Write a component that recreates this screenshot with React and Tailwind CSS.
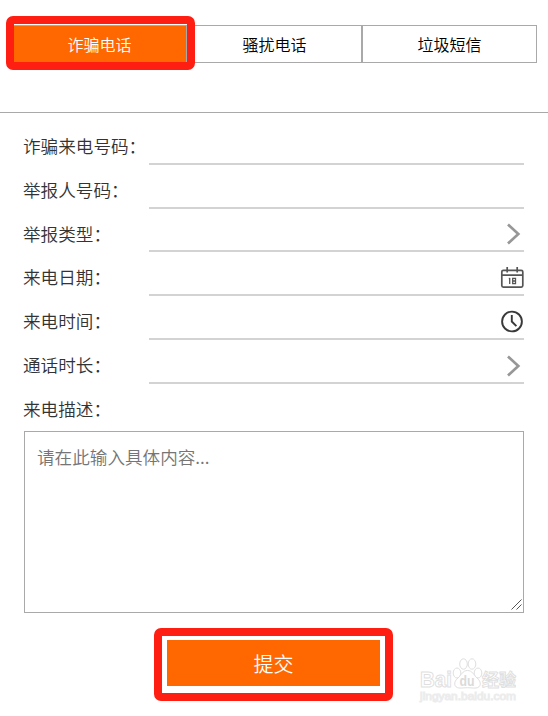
import React from "react";

function Chevron() {
  return (
    <svg className="mr-[3px] mb-[5px] h-[22px] w-[15px]" viewBox="0 0 15 22" fill="none" stroke="#979797" strokeWidth="2.7">
      <path d="M2 1.5 L12.3 11 L2 20.5" />
    </svg>
  );
}

function Calendar() {
  return (
    <svg className="mb-[5px] h-[23px] w-[24px]" viewBox="0 0 24 23" fill="none" stroke="#555" strokeWidth="1.7">
      <rect x="1.8" y="4.3" width="21" height="16.8" rx="1.5" />
      <path d="M1.8 9.2h21M7.2 1v5.5M17.2 1v5.5" />
      <path d="M9.7 12v6M8.8 12.5h.9M12.7 12.3h2.8v2.7h-2.8zM12.7 15h2.8v2.7h-2.8z" strokeWidth="1.3" />
    </svg>
  );
}

function Clock() {
  return (
    <svg className="mb-[5px] h-[23px] w-[24px]" viewBox="0 0 24 23" fill="none" stroke="#3a3a3a" strokeWidth="1.9">
      <circle cx="12" cy="11.5" r="9.9" />
      <path d="M11.8 5v6.5l4.6 4.6" />
    </svg>
  );
}

const rows = [
  { label: "诈骗来电号码：", height: "h-[44px]" },
  { label: "举报人号码：", height: "h-[44px]" },
  { label: "举报类型：", height: "h-[43px]", icon: <Chevron /> },
  { label: "来电日期：", height: "h-[44px]", icon: <Calendar /> },
  { label: "来电时间：", height: "h-[44px]", icon: <Clock /> },
  { label: "通话时长：", height: "h-[44px]", icon: <Chevron /> },
];

function FieldLabel({ children }) {
  return (
    <label className="-ml-px w-[126px] shrink-0 pt-[12px] text-[17.6px] leading-[26px] whitespace-nowrap">
      {children}
    </label>
  );
}

function Watermark() {
  return (
    <svg className="absolute top-[654px] left-[416px] h-[52px] w-[106px]" viewBox="0 0 106 52" fill="#fff" stroke="#dfdfdf" strokeWidth="1">
      <text x="4" y="33" fontSize="22" fontWeight="700" textLength="32" lengthAdjust="spacingAndGlyphs" className="font-['Liberation_Sans',sans-serif]">Bai</text>
      <ellipse cx="41" cy="19" rx="3.8" ry="5" />
      <ellipse cx="47.5" cy="10" rx="3.8" ry="5.2" />
      <ellipse cx="56" cy="10" rx="3.8" ry="5.2" />
      <ellipse cx="62" cy="19" rx="3.8" ry="5" />
      <path d="M51.5 16.5c-5 0-6 4.500-9.500 7.500-5 4-4 9.500 1 10 3 .3 5-.3 8.500-.3s5.500.6 8.500.3c5-.5 6-6 1-10-3.500-3-4.500-7.500-9.500-7.500z" />
      <text x="43.5" y="31.5" fontSize="14" fontWeight="700" fill="#dadada" stroke="none" textLength="15" lengthAdjust="spacingAndGlyphs" className="font-['Liberation_Sans',sans-serif]">du</text>
      <text x="66" y="31.5" fontSize="17" fontWeight="700" textLength="34" lengthAdjust="spacingAndGlyphs" className="font-['Noto_Sans_CJK_SC',sans-serif]">经验</text>
      <text x="4" y="46" fontSize="11" fill="#fff" stroke="#ececec" textLength="96" lengthAdjust="spacingAndGlyphs" className="font-['Liberation_Sans',sans-serif]">jingyan.baidu.com</text>
    </svg>
  );
}

export default function App() {
  return (
    <div className="relative h-[716px] w-[548px] overflow-hidden bg-white font-['Noto_Sans_CJK_SC',sans-serif] font-[350] text-[#333]">
      <header className="h-[113px] border-b border-[#a9a9a9] pt-[25px] pl-3">
        <nav className="flex h-[38px] w-[525px] text-base text-black">
          <button className="w-[175px] border border-[#a9a9a9] bg-[#ff6700] leading-none text-white">诈骗电话</button>
          <button className="w-[175px] border border-[#a9a9a9] leading-none">骚扰电话</button>
          <button className="w-[175px] border border-[#a9a9a9] leading-none">垃圾短信</button>
        </nav>
      </header>
      <main className="px-6 pt-2">
        {rows.map((row) => (
          <div key={row.label} className={`flex ${row.height}`}>
            <FieldLabel>{row.label}</FieldLabel>
            <div className="flex flex-1 items-end justify-end border-b-2 border-[#d3d3d3]">{row.icon}</div>
          </div>
        ))}
        <div className="flex h-[47px]">
          <FieldLabel>来电描述：</FieldLabel>
        </div>
        <div className="relative h-[182px]">
          <textarea
            className="block h-full w-full resize-none border border-[#a9a9a9] px-[12px] py-[12px] text-[17.6px] leading-[26px] outline-none placeholder:text-[#757575]"
            placeholder="请在此输入具体内容..."
          />
          <svg className="absolute right-[2px] bottom-[3px] h-[11px] w-[11px]" viewBox="0 0 11 11" stroke="#555" strokeWidth="1">
            <path d="M.5 10.5 10.5 .5M5.5 10.5l5-5" />
          </svg>
        </div>
        <button className="mt-[27px] ml-[143px] block h-[46px] w-[213px] bg-[#ff6700] pt-px text-[20px] leading-none text-white">提交</button>
      </main>
      <div className="absolute top-[16px] left-[6px] h-[54px] w-[189px] rounded-[7px] border-8 border-[#ff1e12]" />
      <div className="absolute top-[628px] left-[154px] h-[73px] w-[239px] rounded-[7px] border-8 border-[#ff1e12]" />
      <Watermark />
    </div>
  );
}
